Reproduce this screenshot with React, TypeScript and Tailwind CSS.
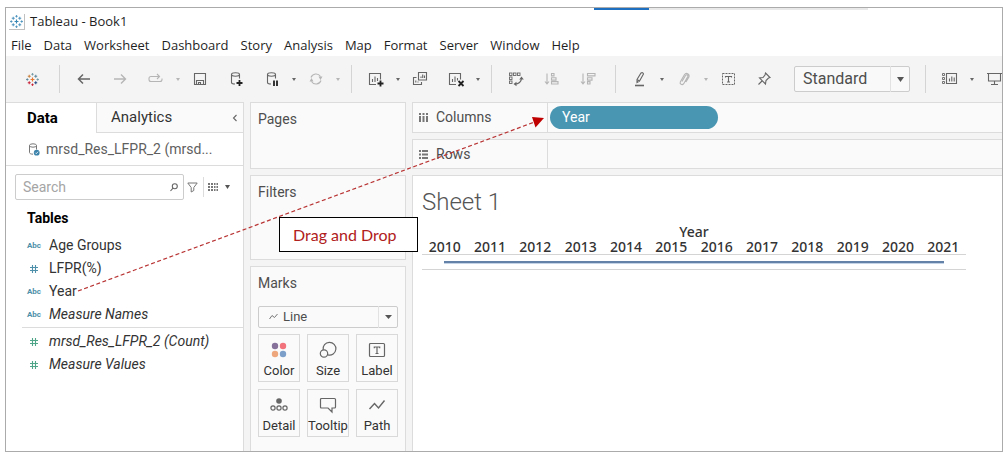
import type { ReactNode } from "react";

const UI = "font-['Roboto','Liberation_Sans',sans-serif]";

function Icon({ children, label, dim = false }: { children: ReactNode; label: string; dim?: boolean }) {
  return (
    <button
      aria-label={label}
      className={`flex h-8 w-9 shrink-0 items-center justify-center ${dim ? "text-[#b5b5b5]" : "text-[#666666]"}`}
    >
      <svg width="20" height="20" viewBox="0 0 20 20" fill="none" stroke="currentColor" strokeWidth="1.1">
        {children}
      </svg>
    </button>
  );
}

function Caret({ label, dim = false }: { label: string; dim?: boolean }) {
  return (
    <button
      aria-label={label}
      className={`flex h-8 w-2 shrink-0 items-center justify-center ${dim ? "text-[#b5b5b5]" : "text-[#666666]"}`}
    >
      <svg width="4" height="3" viewBox="0 0 4 3" fill="currentColor">
        <path d="M0 0h4L2 3z" />
      </svg>
    </button>
  );
}

function Separator() {
  return <span className="mr-[6px] ml-[9px] h-7 w-px shrink-0 bg-[#d4d4d4]" />;
}

function TableauMark({ size, colors }: { size: number; colors: string[] }) {
  const plus = (x: number, y: number, r: number) => `M${x - r} ${y}h${2 * r}M${x} ${y - r}v${2 * r}`;
  return (
    <svg width={size} height={size} viewBox="0 0 20 20" fill="none" strokeWidth="1.5">
      <path d={plus(10, 10, 3)} stroke={colors[0]} strokeWidth="1.8" />
      <path d={plus(5, 5, 2.3)} stroke={colors[1]} />
      <path d={plus(15, 5, 2.3)} stroke={colors[2]} />
      <path d={plus(5, 15, 2.3)} stroke={colors[3]} />
      <path d={plus(15, 15, 2.3)} stroke={colors[4]} />
      <path d={plus(10, 2, 1.8)} stroke={colors[5]} />
      <path d={plus(10, 18, 1.8)} stroke={colors[3]} />
      <path d={plus(2, 10, 1.8)} stroke={colors[2]} />
      <path d={plus(18, 10, 1.8)} stroke={colors[5]} />
    </svg>
  );
}

const menus = ["File", "Data", "Worksheet", "Dashboard", "Story", "Analysis", "Map", "Format", "Server", "Window", "Help"];

function Toolbar() {
  return (
    <div className="flex h-[46px] items-center overflow-hidden bg-[#f4f4f4] pl-2">
      <button aria-label="Start page" className="flex h-8 w-9 shrink-0 items-center justify-center">
        <TableauMark size={13} colors={["#e8762c", "#c9803c", "#5b879b", "#c72035", "#1f447e", "#7099a6"]} />
      </button>
      <Separator />
      <Icon label="Undo">
        <path d="M16 10H5M9 5.500L4.500 10L9 14.500" strokeWidth="1.500" />
      </Icon>
      <Icon label="Redo" dim>
        <path d="M4 10h11M11 5.500L15.500 10L11 14.500" strokeWidth="1.400" />
      </Icon>
      <Icon label="Replay animation" dim>
        <path d="M7 7.500H5a2 2 0 0 0-2 2v1a2 2 0 0 0 2 2h9a2 2 0 0 0 2-2v-1M5 7.500h8.500M11 5l2.500 2.500L11 10" />
      </Icon>
      <Caret label="Replay options" dim />
      <Icon label="Save">
        <path d="M4.500 4.500h11v11h-11zM6.500 15.500v-4h7v4M8.500 15.500v-2h2v2" />
      </Icon>
      <Icon label="New data source">
        <path d="M5.500 5.500v8c0 1 1.500 1.500 3.500 1.500M13.500 5.500v4" />
        <ellipse cx="9.500" cy="5.500" rx="4" ry="1.700" />
        <path d="M13.500 11v6M10.500 14h6" stroke="#222" strokeWidth="1.800" />
      </Icon>
      <Icon label="Pause auto updates">
        <path d="M5.500 5.500v8c0 1 1.500 1.500 3.500 1.500M13.500 5.500v4" />
        <ellipse cx="9.500" cy="5.500" rx="4" ry="1.700" />
        <path d="M12 11.500v5.500M15 11.500v5.500" stroke="#222" strokeWidth="1.800" />
      </Icon>
      <Caret label="Auto update options" />
      <Icon label="Run update" dim>
        <path d="M5 8.500a5.300 5.300 0 0 1 9.500-1M15 11.500a5.300 5.300 0 0 1-9.500 1" />
        <path d="M16.500 7.500h-4L14.500 11zM3.500 12.500h4L5.500 9z" fill="currentColor" stroke="none" />
      </Icon>
      <Caret label="Run update options" dim />
      <Separator />
      <Icon label="New worksheet">
        <path d="M10 15.500H3.500v-11h11v6M6.500 13v-3M9 13V7.500M11.500 12V9" />
        <path d="M14.500 11.500v6M11.500 14.500h6" stroke="#222" strokeWidth="1.800" />
      </Icon>
      <Caret label="New worksheet options" />
      <Icon label="Duplicate">
        <path d="M8.500 3.500h8v7.500h-8zM11 9V7.500M12.700 9V5.500M14.500 9V6.500M6.500 8.500h-3v7h8v-2.500M5.800 13.500v-2M8 13.500v-1" />
      </Icon>
      <Icon label="Clear sheet">
        <path d="M10 15.500H3.500v-11h11v6M6.500 13v-3M9 13V7.500M11.500 11.500V9" />
        <path d="M12.500 12l5 5M17.500 12l-5 5" stroke="#222" strokeWidth="1.800" />
      </Icon>
      <Caret label="Clear options" />
      <Separator />
      <Icon label="Swap rows and columns">
        <g strokeWidth=".9">
          <rect x="3.500" y="4" width="2.500" height="2.500" />
          <rect x="7.500" y="4" width="2.500" height="2.500" />
          <rect x="11.500" y="4" width="2.500" height="2.500" />
          <rect x="3.500" y="8" width="2.500" height="2.500" />
          <rect x="3.500" y="12" width="2.500" height="2.500" />
        </g>
        <path d="M9 15c3.500 0 6.500-2 6.500-6" />
        <path d="M13.200 10.500h4.600L15.500 7.500zM10.500 12.700v4.600L7.500 15z" fill="currentColor" stroke="none" />
      </Icon>
      <Icon label="Sort ascending" dim>
        <path d="M5 4.500v10M3 12.500l2 2.300l2-2.300M9.500 4.500H12v2.400H9.500zM9.500 8.700H14v2.400H9.500zM9.500 12.600h6.500V15H9.500z" />
      </Icon>
      <Icon label="Sort descending" dim>
        <path d="M5 4.500v10M3 12.500l2 2.300l2-2.300M9.500 4.500H17v2.400H9.500zM9.500 8.700H14v2.400H9.500zM9.500 12.600H12V15H9.500z" />
      </Icon>
      <Separator />
      <Icon label="Highlight">
        <path d="M7 10.500L11 4q1.800-1 2.500 1L9.500 12L7 13.500zM7 10.500l2.500 1.500" />
        <path d="M5 16.500h9" strokeWidth="1.600" />
      </Icon>
      <Caret label="Highlight options" />
      <Icon label="Group members" dim>
        <path d="M8 12.500l3.500-6c1.300-1.500 3-.5 2.200 1.200l-4 7c-1.500 2-4.500.3-3.300-2l4-7c1.800-2.500 5.500-.8 4.500 2.300l-3 5" />
      </Icon>
      <Caret label="Group options" dim />
      <Icon label="Show mark labels">
        <path d="M4.500 4.500h12v11h-12z" strokeDasharray="2 1" strokeWidth="1" />
        <path d="M7.500 8.500V7.500h6v1M10.500 7.500v5.500M9 13h3" />
      </Icon>
      <Icon label="Fix axes">
        <path d="M11.500 4l4.500 4.500l-1.500.5l-2.500 2.500l-.5 3.500l-6-6l3.500-.5L11 6zM8 12l-3.500 3.500" />
      </Icon>
      <span className="relative ml-3 h-[26px] w-[116px] shrink-0">
        <select
          aria-label="Fit"
          className={`h-full w-full appearance-none rounded-[2px] border border-[#cccccc] bg-[#f9f9f9] pl-2 text-[16px] text-[#4e4e4e] ${UI}`}
        >
          <option>Standard</option>
        </select>
        <span className="pointer-events-none absolute inset-y-0 right-0 flex w-5 items-center justify-center border-l border-[#e2e2e2]">
          <svg width="7" height="5" viewBox="0 0 7 5" fill="#555">
            <path d="M0 0h7L3.500 5z" />
          </svg>
        </span>
      </span>
      <span className="w-[6px] shrink-0" />
      <Separator />
      <Icon label="Show cards">
        <path d="M6.500 4.500h10v10h-10zM9.500 12.500v-3M11.800 12.500v-5M14.200 12.500v-4" />
        <path d="M2.500 4.500h2v2h-2zM2.500 8.500h2v2h-2zM2.500 12.500h2v2h-2z" strokeWidth=".9" />
      </Icon>
      <Caret label="Show cards options" />
      <Icon label="Presentation mode">
        <path d="M3 4.500h15M4.500 4.500v7.500h12V4.500M10.500 12v3.500M7 15.500h7" />
      </Icon>
    </div>
  );
}

function FieldIcon({ kind, green = false }: { kind: "abc" | "num"; green?: boolean }) {
  return (
    <span className="flex w-[14px] items-center justify-center">
      {kind === "abc" ? (
        <span className="text-[8px] font-bold text-[#4e8fa9]">Abc</span>
      ) : (
        <svg width="8" height="8" viewBox="0 0 8 8" fill="none" stroke={green ? "#4fa587" : "#4e8fa9"} strokeWidth="1.100">
          <path d="M2.500 0v8M5.500 0v8M0 2.500h8M0 5.500h8" />
        </svg>
      )}
    </span>
  );
}

function Field({ kind, name, italic = false, green = false }: { kind: "abc" | "num"; name: string; italic?: boolean; green?: boolean }) {
  return (
    <li className="flex h-[23px] items-center gap-2 pl-[21px]">
      <FieldIcon kind={kind} green={green} />
      <span className={`whitespace-nowrap text-[14px] text-[#333333] ${italic ? "italic" : ""}`}>{name}</span>
    </li>
  );
}

function DataPane() {
  return (
    <aside className="flex w-[238px] shrink-0 flex-col border-t border-r border-[#dcdcdc] bg-white">
      <div role="tablist" className="flex h-[30px] text-[15px] text-[#333333]">
        <button role="tab" aria-selected="true" className="w-[90px] pl-[21px] text-left font-bold text-black">
          Data
        </button>
        <div className="flex flex-1 items-center justify-between border-b border-l border-[#dcdcdc] bg-[#fafafa] pr-1 pl-[14px]">
          <button role="tab" aria-selected="false">Analytics</button>
          <button aria-label="Collapse pane">
            <svg width="8" height="10" viewBox="0 0 8 10" fill="none" stroke="#666" strokeWidth="1.100">
              <path d="M5.500 2L2.500 5l3 3" />
            </svg>
          </button>
        </div>
      </div>
      <button className="flex h-[33px] items-center gap-[6px] border-b border-[#dcdcdc] pl-[23px] text-[14px] text-[#5f5f5f]">
        <svg width="11" height="13" viewBox="0 0 11 13" fill="none" stroke="#777">
          <ellipse cx="4" cy="2.500" rx="3.500" ry="1.700" />
          <path d="M.5 2.500v7c0 1 1.500 1.700 3.500 1.700M7.500 2.500v4" />
          <circle cx="7.700" cy="9.700" r="2.900" fill="#3c83ab" stroke="none" />
          <path d="M6.300 9.700l1 1l1.800-2" stroke="#fff" strokeWidth=".8" />
        </svg>
        mrsd_Res_LFPR_2 (mrsd...
      </button>
      <div className="flex items-center pt-2 pl-[9px]">
        <label className="flex h-[26px] w-[169px] items-center rounded-[2px] border border-[#cccccc] bg-white pr-[5px] pl-[7px]">
          <input
            aria-label="Search"
            placeholder="Search"
            className="min-w-0 flex-1 bg-transparent text-[14px] outline-none placeholder:text-[#a5a5a5]"
          />
          <svg width="8" height="9" viewBox="0 0 8 9" fill="none" stroke="#666" strokeWidth="1.100">
            <circle cx="4.800" cy="3.200" r="2.500" />
            <path d="M3 5.200L.5 8" />
          </svg>
        </label>
        <button aria-label="Filter fields" className="ml-[3px]">
          <svg width="11" height="11" viewBox="0 0 11 11" fill="none" stroke="#777">
            <path d="M.8 1h9.400L6.800 5.500v3L4.200 10V5.500z" />
          </svg>
        </button>
        <span className="mr-1 ml-[5px] h-5 w-px bg-[#dcdcdc]" />
        <button aria-label="View options" className="flex items-center gap-[7px]">
          <svg width="10" height="8" viewBox="0 0 10 8" fill="#777">
            <path d="M0 0h2v2H0zM3 0h2v2H3zM6 0h1.500v2H6zM8.500 0H10v2H8.500zM0 3h2v2H0zM3 3h2v2H3zM6 3h1.500v2H6zM8.500 3H10v2H8.500zM0 6h2v2H0zM3 6h2v2H3zM6 6h1.500v2H6zM8.500 6H10v2H8.500z" />
          </svg>
          <svg width="5" height="4" viewBox="0 0 5 4" fill="#555">
            <path d="M0 0h5L2.500 4z" />
          </svg>
        </button>
      </div>
      <h2 className="pt-2 pl-[21px] text-[14px] leading-5 font-bold text-black">Tables</h2>
      <ul className="pt-[6px] pb-px">
        <Field kind="abc" name="Age Groups" />
        <Field kind="num" name="LFPR(%)" />
        <Field kind="abc" name="Year" />
        <Field kind="abc" name="Measure Names" italic />
      </ul>
      <ul className="ml-4 border-t border-[#dcdcdc] pt-[2px] *:-ml-4">
        <Field kind="num" name="mrsd_Res_LFPR_2 (Count)" italic green />
        <Field kind="num" name="Measure Values" italic green />
      </ul>
    </aside>
  );
}

function MarkButton({ label, children }: { label: string; children: ReactNode }) {
  return (
    <button className="flex h-12 flex-col items-center justify-between border border-[#d9d9d9] pt-[6px] text-[13px] leading-5 text-[#333333]">
      <svg width="18" height="18" viewBox="0 0 18 18" fill="none" stroke="#666" strokeWidth="1.200">
        {children}
      </svg>
      {label}
    </button>
  );
}

function Cards() {
  const card = "border border-[#dcdcdc] bg-[#fafafa] px-[7px] text-[14px] text-[#4e4e4e]";
  return (
    <div className="flex w-[156px] shrink-0 flex-col gap-[6px]">
      <section className={`h-[67px] pt-[6px] ${card}`}>
        <h3>Pages</h3>
      </section>
      <section className={`h-[85px] pt-[6px] ${card}`}>
        <h3>Filters</h3>
      </section>
      <section className={`flex-1 border-b-0 pt-[6px] pb-[14px] ${card}`}>
        <h3>Marks</h3>
        <div className="relative mt-3 h-[22px]">
          <select
            aria-label="Mark type"
            className="h-full w-full appearance-none rounded-[2px] border border-[#cccccc] bg-[#fafafa] pl-6 text-[13px] text-[#4e4e4e]"
          >
            <option>Line</option>
          </select>
          <svg className="pointer-events-none absolute top-[7px] left-[11px]" width="9" height="7" viewBox="0 0 9 7" fill="none" stroke="#777">
            <path d="M.5 6L3 2.500L5.500 4.500L8.500 1" />
          </svg>
          <span className="pointer-events-none absolute inset-y-0 right-0 flex w-5 items-center justify-center border-l border-[#e2e2e2]">
            <svg width="7" height="4" viewBox="0 0 7 4" fill="#555">
              <path d="M0 0h7L3.500 4z" />
            </svg>
          </span>
        </div>
        <div className="mt-[6px] grid grid-cols-3 gap-[7px]">
          <MarkButton label="Color">
            <g stroke="none">
              <circle cx="5" cy="5" r="3.200" fill="#85719a" />
              <circle cx="13" cy="5" r="3.200" fill="#f2737c" />
              <circle cx="5" cy="13" r="3.200" fill="#eea77c" />
              <circle cx="13" cy="13" r="3.200" fill="#7c9fca" />
            </g>
          </MarkButton>
          <MarkButton label="Size">
            <path d="M4.200 8.800a6.400 6.400 0 1 1 4.800 5.100" />
            <circle cx="5" cy="12.500" r="3.700" />
          </MarkButton>
          <MarkButton label="Label">
            <rect x="1.500" y="2.500" width="15" height="13" rx="1" />
            <path d="M6.300 7.300V6h5.400v1.300M9 6v6.500M7.500 12.500h3" />
          </MarkButton>
          <MarkButton label="Detail">
            <circle cx="9" cy="5" r="2.800" fill="#666" stroke="none" />
            <circle cx="3" cy="12" r="2.100" />
            <circle cx="9" cy="12" r="2.100" />
            <circle cx="15" cy="12" r="2.100" />
          </MarkButton>
          <MarkButton label="Tooltip">
            <path d="M2.500 2.500h13q1 0 1 1v7.500q0 1-1 1H13v4L9 12H2.500q-1 0-1-1V3.500q0-1 1-1z" />
          </MarkButton>
          <MarkButton label="Path">
            <path d="M1.500 13L6.500 7.500L10.500 12L16.500 4.500" strokeWidth="1.400" />
          </MarkButton>
        </div>
      </section>
    </div>
  );
}

function Shelf({ label, icon, children }: { label: string; icon: ReactNode; children?: ReactNode }) {
  return (
    <div className="flex h-full items-stretch border border-r-0 border-[#dcdcdc] bg-[#fafafa]">
      <div className="flex w-[135px] shrink-0 items-center gap-2 border-r border-[#dcdcdc] pl-[6px] text-[14px] text-[#4e4e4e]">
        <svg width="9" height="9" viewBox="0 0 9 9" fill="#777">
          {icon}
        </svg>
        {label}
      </div>
      <div className="flex flex-1 items-center pl-[2px]">{children}</div>
    </div>
  );
}

const years = [2010, 2011, 2012, 2013, 2014, 2015, 2016, 2017, 2018, 2019, 2020, 2021];

function Sheet() {
  return (
    <section className="flex-1 border border-r-0 border-b-0 border-[#dcdcdc] bg-white pl-[9px] text-[#333333]">
      <h1 className="pt-[10px] text-[24px] leading-8 font-light text-[#555555]">Sheet 1</h1>
      <div className="mr-9 max-w-[544px] font-['Noto_Sans','Open_Sans',sans-serif] text-[14px] font-medium">
        <div className="pt-[6px] text-center leading-4">Year</div>
        <div className="grid h-[15px] grid-cols-12 border-b border-[#d4d4d4] text-center leading-[14px]">
          {years.map((y) => (
            <span key={y}>{y}</span>
          ))}
        </div>
        <div className="h-[15px] border-b border-[#d4d4d4]">
          <svg className="block w-full" height="14" viewBox="0 0 544 14" preserveAspectRatio="none">
            <path d="M22 8h500" stroke="#c4d3e6" strokeWidth="2" />
            <path d="M22 7h500" stroke="#6482a8" strokeWidth="2" />
          </svg>
        </div>
      </div>
    </section>
  );
}

export default function App() {
  return (
    <div className={`relative flex min-h-screen flex-col bg-white pt-[7px] pr-[3px] pb-[2px] pl-[5px] ${UI}`}>
      <div className="flex flex-1 flex-col overflow-hidden border border-[#ababab] bg-[#f4f4f4]">
        <header className="relative bg-white font-['Open_Sans','Noto_Sans',sans-serif] text-[#1f1f1f]">
          <div className="absolute top-0 left-[588px] flex h-[2px] w-[274px] bg-[#e9e9e9]">
            <span className="w-[55px] bg-[#1f6fc0]" />
          </div>
          <div className="flex h-[27px] items-center gap-[5px] pl-[3px] text-[13px]">
            <span className="flex size-4 items-center justify-center border-r border-b border-[#c0c0c0]">
              <TableauMark size={13} colors={["#3787b5", "#4c93bd", "#4c93bd", "#4c93bd", "#4c93bd", "#4c93bd"]} />
            </span>
            <span>Tableau - Book1</span>
          </div>
          <nav className="flex h-[21px] items-center gap-3 pt-px pl-[5px] text-[13px]">
            {menus.map((m) => (
              <button key={m}>{m}</button>
            ))}
          </nav>
        </header>
        <Toolbar />
        <main className="flex flex-1 gap-[6px]">
          <DataPane />
          <Cards />
          <div className="flex min-w-0 flex-1 flex-col gap-[6px]">
            <div className="h-[31px]">
              <Shelf label="Columns" icon={<path d="M0 0h2v2H0zM3.500 0h2v2h-2zM7 0h2v2H7zM0 3h2v6H0zM3.500 3h2v6h-2zM7 3h2v6H7z" />}>
                <button className="h-[23px] w-[168px] rounded-full bg-[#4996b2] pl-3 text-left text-[14px] text-white">
                  Year
                </button>
              </Shelf>
            </div>
            <div className="h-[30px]">
              <Shelf label="Rows" icon={<path d="M0 0h2v2H0zM0 3.500h2v2H0zM0 7h2v2H0zM3 0h6v2H3zM3 3.500h6v2H3zM3 7h6v2H3z" />} />
            </div>
            <Sheet />
          </div>
        </main>
      </div>

      <svg className="pointer-events-none absolute top-0 left-0" width="560" height="310" viewBox="0 0 560 310">
        <path d="M78 291L536 121.500" stroke="#b93434" strokeWidth="1.200" strokeDasharray="4 2.500" fill="none" />
        <path d="M544 118L532 117L535.500 127.500z" fill="#c00000" />
      </svg>
      <div className="absolute top-[217px] left-[279px] flex h-[35px] w-[139px] items-center border border-black bg-white pl-[13px] font-['Lato','Open_Sans',sans-serif] text-[16px] text-[#b02020]">
        Drag and Drop
      </div>
    </div>
  );
}
